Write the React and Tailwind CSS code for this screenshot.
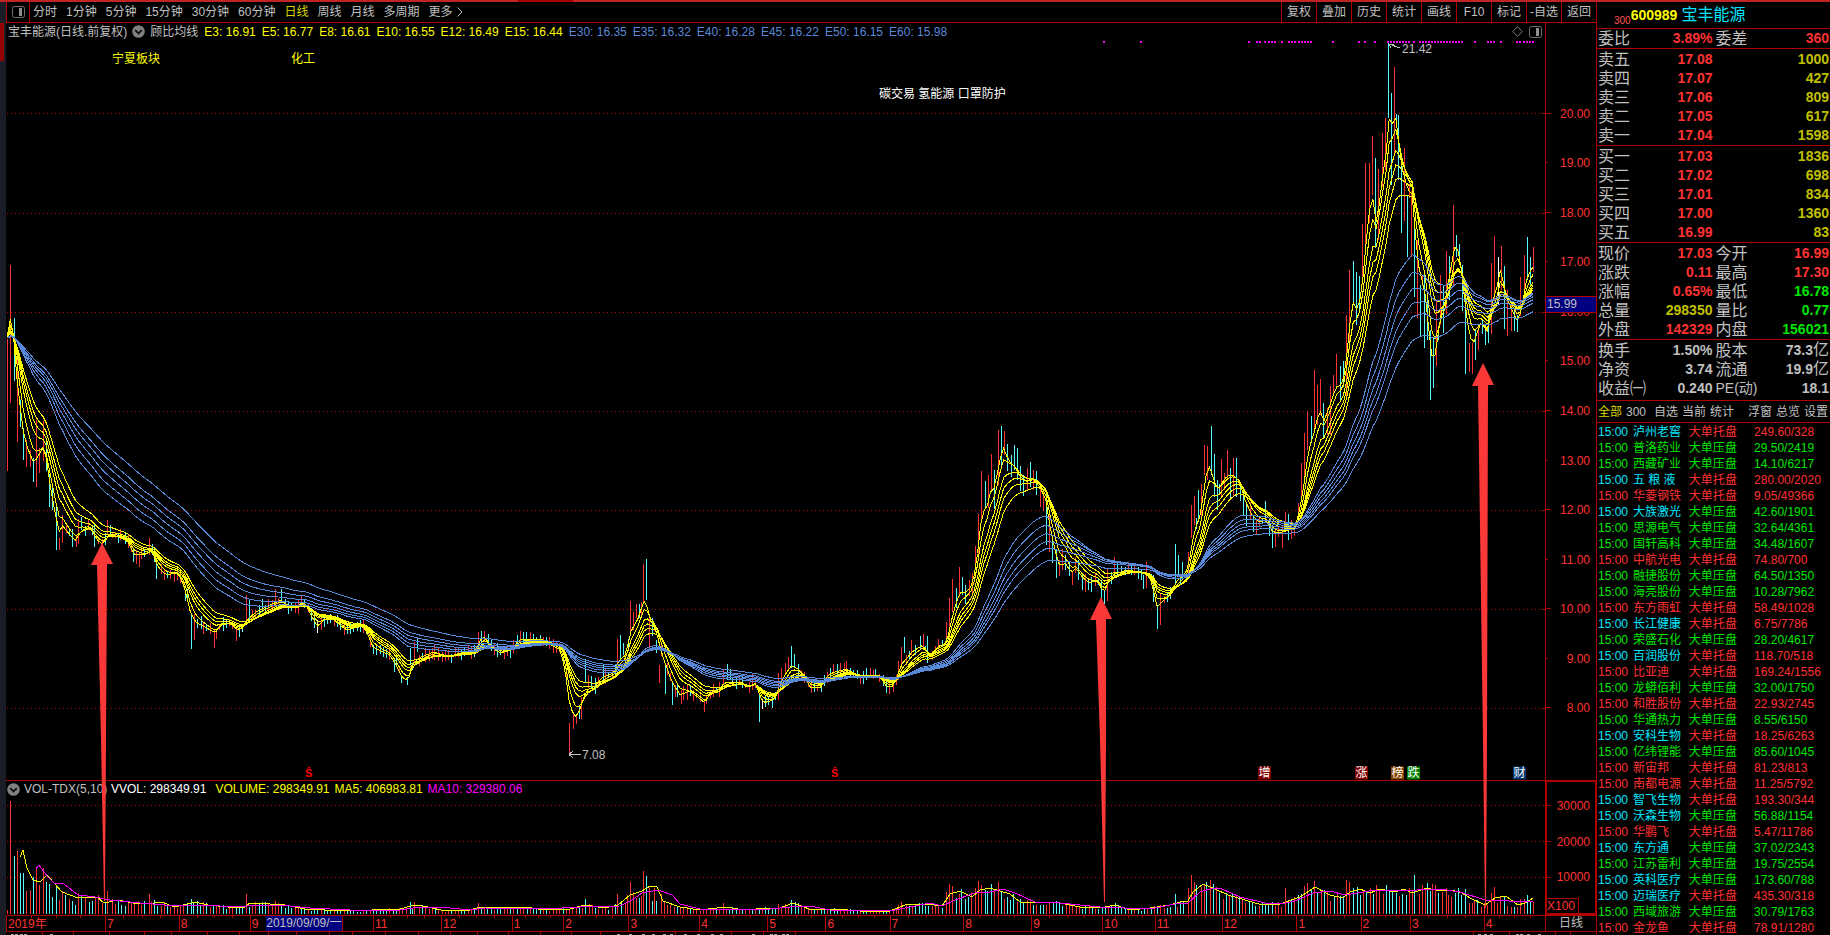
import React from 'react';

const RED = '#ff3232';
const CYAN = '#54fcfc';

const FAST = [
  [7,338],[10,318],[14,338],[17,380],[23,430],[28,450],[34,463],[43,448],[47,460],[50,485],[56,517],[59,532],[62,525],[75,541],[81,531],[90,527],[98,541],[103,544],[109,535],[120,537],[128,542],[134,554],[145,555],[152,550],[158,567],[166,575],[177,573],[182,580],[186,593],[191,615],[197,623],[207,628],[215,633],[222,623],[230,623],[237,630],[243,628],[247,620],[256,612],[268,606],[281,600],[289,607],[297,607],[303,601],[307,607],[312,617],[318,627],[323,620],[333,619],[346,630],[362,626],[366,630],[373,647],[383,652],[390,655],[396,665],[402,677],[408,681],[413,663],[421,657],[434,652],[450,657],[459,653],[475,652],[480,640],[485,637],[492,648],[501,653],[511,650],[519,640],[528,639],[543,640],[555,647],[561,650],[566,677],[570,707],[575,717],[579,712],[584,697],[587,690],[594,687],[603,677],[614,673],[619,660],[626,655],[630,633],[639,617],[643,602],[646,600],[649,617],[656,630],[660,647],[665,663],[672,682],[680,695],[690,691],[698,697],[705,703],[710,693],[719,690],[724,683],[731,682],[742,682],[747,688],[756,683],[759,693],[763,703],[774,700],[779,687],[785,675],[791,666],[797,668],[805,677],[810,688],[821,687],[828,675],[835,672],[847,669],[858,677],[874,675],[881,678],[887,687],[892,687],[897,678],[901,665],[912,652],[923,645],[930,657],[937,647],[947,643],[949,630],[955,607],[960,592],[966,593],[972,585],[976,567],[979,540],[982,513],[987,507],[991,490],[995,488],[999,462],[1004,447],[1008,460],[1015,467],[1021,478],[1028,482],[1033,479],[1040,487],[1046,500],[1050,527],[1055,550],[1060,567],[1065,562],[1071,573],[1076,568],[1083,578],[1090,583],[1097,580],[1104,593],[1108,582],[1114,574],[1128,570],[1143,573],[1150,577],[1154,593],[1157,607],[1164,600],[1170,595],[1176,582],[1186,573],[1190,557],[1195,527],[1199,522],[1204,490],[1207,470],[1210,467],[1214,480],[1218,491],[1222,483],[1228,475],[1234,475],[1240,483],[1245,500],[1252,515],[1259,522],[1267,520],[1271,530],[1276,533],[1283,532],[1295,528],[1298,517],[1302,497],[1305,477],[1309,447],[1313,437],[1317,420],[1320,409],[1323,423],[1329,408],[1336,387],[1342,385],[1346,367],[1348,337],[1353,302],[1357,310],[1361,297],[1365,257],[1368,220],[1372,193],[1376,223],[1379,207],[1383,173],[1387,147],[1389,118],[1391,130],[1395,112],[1398,137],[1403,173],[1408,190],[1412,193],[1415,230],[1418,263],[1425,293],[1430,340],[1433,367],[1437,343],[1441,313],[1445,303],[1450,273],[1455,245],[1458,250],[1462,273],[1465,303],[1469,333],[1473,345],[1477,333],[1481,323],[1488,332],[1492,303],[1497,287],[1501,267],[1505,293],[1512,310],[1518,322],[1522,307],[1527,277],[1533,267],
];

const BARS = `7,339,471,r 10,265,403,r 14,318,381,c 17,360,442,r 20,400,427,c 23,428,460,c 26,440,467,r 30,450,467,r 33,458,482,c 36,420,487,r 39,448,473,r 43,421,461,r 46,441,471,c 49,474,507,c 52,488,510,c 56,507,550,c 59,538,550,r 62,515,543,r 72,529,547,c 78,519,544,r 81,517,530,c 88,520,530,r 94,525,547,c 107,520,535,r 110,525,535,c 120,529,540,r 133,548,562,c 136,550,564,r 139,552,567,r 149,538,555,r 152,544,555,c 156,560,579,c 185,590,601,c 191,614,649,c 194,614,640,r 201,616,629,c 214,630,648,r 236,628,641,r 246,595,620,r 249,600,620,c 262,599,612,c 275,589,607,r 281,589,603,c 301,595,606,r 317,620,633,w 394,658,672,c 401,675,683,c 407,677,685,c 410,648,665,c 414,642,662,r 417,638,652,c 434,645,660,r 478,632,648,r 481,631,645,c 488,634,648,c 520,631,645,r 523,632,645,c 526,632,645,c 569,723,753,r 573,712,729,r 576,714,724,r 581,697,719,r 585,659,682,c 588,675,688,r 591,676,688,c 603,665,680,c 617,639,665,r 620,635,660,c 623,643,655,c 630,601,633,r 633,612,630,r 636,604,618,r 639,604,618,c 643,564,602,r 646,559,600,c 649,615,647,r 652,618,636,c 656,640,653,c 659,665,683,r 665,663,694,c 672,682,705,c 675,685,697,r 681,690,704,r 704,700,712,r 723,669,685,r 727,664,680,c 730,669,680,c 752,674,690,r 759,693,722,c 762,699,709,w 778,673,700,r 781,668,685,r 785,663,675,r 788,657,670,r 791,646,668,c 794,654,668,c 833,664,675,r 846,661,675,r 875,669,677,c 898,661,680,r 901,647,668,r 904,637,653,c 911,640,655,r 920,636,650,c 923,634,648,r 927,636,663,c 946,622,643,r 949,598,648,r 952,579,612,r 956,588,608,c 959,567,597,r 962,577,595,c 965,585,604,c 969,580,596,r 972,573,595,r 975,546,570,r 978,514,560,r 981,471,522,r 985,481,508,c 988,475,508,r 991,454,490,r 994,470,509,c 998,430,485,r 1001,426,465,c 1004,431,455,r 1007,444,471,c 1011,455,477,c 1014,445,470,c 1017,448,480,c 1020,466,491,c 1023,475,496,c 1027,468,490,r 1030,462,487,c 1033,470,490,r 1036,471,495,c 1040,485,507,r 1043,489,511,r 1046,495,545,c 1049,510,552,r 1052,540,563,c 1056,550,578,c 1059,560,576,r 1062,549,570,r 1065,555,570,c 1069,562,576,c 1072,572,585,r 1075,557,573,r 1078,560,580,c 1082,575,590,c 1085,574,592,r 1088,578,590,c 1091,577,592,c 1101,580,600,c 1104,590,604,c 1107,568,601,r 1114,557,575,r 1117,562,576,c 1143,575,589,c 1146,562,588,r 1153,575,602,c 1157,605,629,c 1160,593,625,r 1175,544,583,c 1178,555,575,c 1182,562,578,c 1188,552,575,r 1191,505,538,r 1194,496,525,r 1198,490,520,c 1201,484,520,r 1204,445,475,r 1207,446,480,r 1211,426,475,c 1214,454,497,c 1217,480,510,c 1221,459,497,r 1224,473,490,r 1227,450,478,r 1230,468,499,c 1233,458,497,r 1236,458,497,c 1240,483,501,c 1243,490,516,c 1246,505,526,c 1250,502,520,r 1253,517,532,c 1256,520,534,r 1265,501,523,c 1269,520,536,c 1272,525,548,c 1275,530,547,r 1282,525,548,r 1285,512,532,r 1288,514,540,c 1291,520,539,r 1298,503,523,r 1301,463,502,r 1304,433,480,r 1307,411,450,r 1311,416,443,c 1314,370,432,r 1317,385,425,r 1320,379,415,r 1323,403,437,c 1327,408,435,r 1330,386,435,r 1333,375,393,r 1336,354,385,r 1340,366,400,c 1343,361,387,c 1346,315,400,r 1349,270,350,r 1353,261,305,c 1356,272,325,c 1359,276,310,c 1362,224,285,r 1365,163,255,r 1369,163,223,r 1372,136,195,r 1375,158,248,c 1378,169,240,r 1382,133,187,r 1385,118,170,r 1388,42,118,c 1391,93,185,c 1394,67,155,r 1398,115,180,c 1401,155,233,c 1404,148,221,r 1407,195,257,c 1411,191,257,r 1414,219,297,c 1417,240,318,r 1420,285,336,c 1424,270,348,c 1427,300,340,c 1430,330,400,c 1433,338,388,c 1436,300,366,r 1440,275,325,r 1443,285,333,c 1446,251,314,r 1449,256,300,c 1453,205,287,r 1456,235,257,c 1459,244,265,c 1462,265,311,c 1465,298,374,c 1469,343,372,r 1472,343,374,r 1475,329,360,c 1478,325,350,r 1482,320,334,c 1485,325,345,c 1488,315,343,c 1491,263,334,r 1494,236,300,r 1498,257,305,w 1501,246,290,r 1504,266,329,c 1507,290,336,r 1511,305,331,r 1514,310,331,c 1517,315,332,c 1520,277,316,r 1524,255,293,r 1527,237,280,c 1530,257,285,c 1533,247,272,r`
  .split(' ')
  .map((s) => {
    const [x, top, bottom, kind] = s.split(',');
    return { x: +x, top: +top, bottom: +bottom, color: kind === 'r' ? RED : kind === 'c' ? CYAN : '#ffffff' };
  });

const VOL_BARS = `7,910,r 10,801,r 14,856,c 17,851,r 20,873,c 23,873,c 26,891,r 30,890,r 33,877,c 36,868,r 39,885,r 43,868,r 46,882,c 49,884,c 52,897,c 56,887,c 59,900,r 62,891,r 65,895,c 69,899,r 72,901,c 75,905,c 78,893,r 81,896,c 85,897,r 107,891,r 149,894,r 191,899,c 246,894,r 275,901,r 410,902,c 414,902,r 478,903,r 585,899,c 617,894,r 627,895,r 630,882,r 633,892,r 636,898,r 639,898,c 643,871,r 646,876,c 649,888,r 652,901,c 656,901,c 723,903,r 778,904,r 791,900,c 898,905,r 901,902,r 946,892,r 949,884,r 952,886,r 956,898,c 959,894,r 965,899,c 975,888,r 978,881,r 981,885,r 985,890,c 998,882,r 1001,892,c 1175,894,c 1188,888,r 1191,875,r 1194,882,r 1201,887,r 1204,884,r 1285,888,r 1304,886,r 1307,883,r 1314,881,r 1346,880,r 1349,882,r 1353,888,c 1414,875,c 1427,883,c 1430,891,c 1446,888,r 1465,889,c 1469,903,r 1472,903,r 1491,893,r 1494,887,r 1504,897,c 1507,906,r 1511,907,r 1514,907,c 1520,899,r 1524,899,r 1527,895,c 1530,902,c 1533,902,r`
  .split(' ')
  .map((s) => {
    const [x, top, kind] = s.split(',');
    return { x: +x, top: +top, color: kind === 'r' ? RED : CYAN };
  });

const MA5 = [[20,857],[23,850],[27,868],[33,880],[40,882],[47,875],[54,883],[62,892],[78,898],[97,897],[104,903],[118,900],[133,903],[147,904],[161,902],[175,907],[195,902],[208,905],[228,907],[243,908],[250,903],[270,904],[285,905],[305,909],[345,911],[400,909],[415,905],[428,907],[445,911],[470,910],[480,907],[500,908],[525,907],[545,910],[570,909],[585,905],[605,908],[618,905],[630,895],[642,891],[650,886],[657,887],[663,901],[680,907],[700,910],[725,907],[745,910],[768,908],[780,908],[793,903],[812,910],[835,909],[860,911],[890,911],[905,905],[925,904],[942,906],[950,894],[960,891],[972,897],[980,890],[990,888],[1000,891],[1010,894],[1020,902],[1060,903],[1080,907],[1100,908],[1115,905],[1130,910],[1150,908],[1170,905],[1180,902],[1188,901],[1193,892],[1203,884],[1215,889],[1228,895],[1245,900],[1262,905],[1280,904],[1300,897],[1315,887],[1330,895],[1343,898],[1350,892],[1360,889],[1370,893],[1380,889],[1395,892],[1404,889],[1412,893],[1427,888],[1440,891],[1452,890],[1462,893],[1470,898],[1485,905],[1495,898],[1506,896],[1518,905],[1525,903],[1533,898]];
const MA10 = [[36,869],[39,865],[47,876],[54,883],[64,884],[78,895],[95,897],[110,900],[140,903],[165,905],[200,905],[240,907],[255,905],[280,905],[310,908],[350,910],[400,910],[420,907],[440,907],[470,910],[485,908],[545,909],[580,907],[620,906],[632,900],[642,893],[658,890],[672,895],[680,904],[700,909],[770,909],[800,906],[815,907],[830,910],[890,911],[930,903],[942,906],[955,900],[975,893],[990,892],[1003,889],[1015,893],[1035,902],[1060,903],[1100,907],[1150,909],[1175,904],[1188,903],[1200,892],[1213,888],[1222,889],[1240,897],[1265,903],[1280,904],[1295,901],[1313,893],[1330,891],[1345,895],[1375,890],[1395,891],[1440,889],[1460,892],[1485,900],[1533,902]];

const DAYS = 467;
const dayX = (i) => 7 + (i * 1526) / DAYS;
const noise = (n) => {
  const v = Math.sin(n * 12.9898) * 43758.5453;
  return v - Math.floor(v);
};
function sample(points, x) {
  if (x <= points[0][0]) return points[0][1];
  for (let i = 1; i < points.length; i++) {
    if (x <= points[i][0]) {
      const [x0, y0] = points[i - 1];
      const [x1, y1] = points[i];
      return y0 + ((y1 - y0) * (x - x0)) / (x1 - x0);
    }
  }
  return points[points.length - 1][1];
}

const fastLine = Array.from({ length: DAYS + 1 }, (_, i) => sample(FAST, dayX(i)));
const closes = fastLine.map((y, i) => (i ? 2 * y - fastLine[i - 1] : y));
function emaPath(period) {
  const k = 2 / (period + 1);
  let v = closes[0];
  return closes
    .map((c, i) => {
      v += k * (c - v);
      return `${i ? 'L' : 'M'}${dayX(i).toFixed(1)} ${v.toFixed(1)}`;
    })
    .join('');
}
const linePath = (points) => points.map(([x, y], i) => `${i ? 'L' : 'M'}${x} ${y}`).join('');

const fillerBars = fastLine
  .map((y, i) => ({
    x: Math.round(dayX(i)),
    top: Math.round(y - 2 - noise(i) * 6),
    bottom: Math.round(y + 2 + noise(i + 500) * 6),
    color: noise(i + 900) > 0.5 ? RED : CYAN,
  }))
  .filter((b) => !BARS.some((k) => Math.abs(k.x - b.x) < 2));
const candles = [...fillerBars, ...BARS];

const fillerVolume = fastLine
  .map((_, i) => {
    const x = Math.round(dayX(i));
    const h = (914 - sample(MA5, x)) * (0.65 + noise(i + 77) * 0.6);
    return { x, top: Math.round(914 - h), color: noise(i + 900) > 0.5 ? RED : CYAN };
  })
  .filter((b) => !VOL_BARS.some((k) => Math.abs(k.x - b.x) < 2));
const volumes = [...fillerVolume, ...VOL_BARS];

const SIGNALS = [
  1103, 1140, 1248, 1256, 1259, 1264, 1268, 1271, 1274, 1281, 1288, 1291, 1294, 1298, 1301, 1304, 1307, 1310, 1332, 1358, 1364, 1374,
  1387, 1390, 1393, 1396, 1399, 1402, 1405, 1408, 1413, 1419, 1422, 1425, 1428, 1431, 1434, 1437, 1440, 1443, 1446, 1449, 1452, 1455, 1458, 1461,
  1474, 1487, 1490, 1493, 1500, 1516, 1519, 1523, 1526, 1529, 1532,
];

const PERIODS = ['分时', '1分钟', '5分钟', '15分钟', '30分钟', '60分钟', '日线', '周线', '月线', '多周期'];
const TOOLS = ['复权', '叠加', '历史', '统计', '画线', 'F10', '标记', '-自选', '返回'];
const EMAS = [
  ['E3', '16.91'], ['E5', '16.77'], ['E8', '16.61'], ['E10', '16.55'], ['E12', '16.49'], ['E15', '16.44'],
  ['E30', '16.35'], ['E35', '16.32'], ['E40', '16.28'], ['E45', '16.22'], ['E50', '16.15'], ['E60', '15.98'],
];

const MONTHS = [
  ['2019年', 100], ['7', 74], ['8', 71], ['9', 15], ['2019/09/09/一', 78], ['', 30], ['11', 68], ['12', 71], ['1', 51], ['2', 65],
  ['3', 71], ['4', 68], ['5', 58], ['6', 64], ['7', 74], ['8', 68], ['9', 71], ['10', 52], ['11', 67], ['12', 75], ['1', 64], ['2', 49], ['3', 74], ['4', 61],
];

const R = 'text-[#ff3232]';
const G = 'text-[#00e600]';
const Y = 'text-[#c0c000]';
const W = 'text-[#c0c0c0]';
const C = 'text-[#00e6ff]';

const SECTIONS = [
  [['委比', '3.89%', R, '委差', '360', R]],
  [
    ['卖五', '17.08', R, '', '1000', Y],
    ['卖四', '17.07', R, '', '427', Y],
    ['卖三', '17.06', R, '', '809', Y],
    ['卖二', '17.05', R, '', '617', Y],
    ['卖一', '17.04', R, '', '1598', Y],
  ],
  [
    ['买一', '17.03', R, '', '1836', Y],
    ['买二', '17.02', R, '', '698', Y],
    ['买三', '17.01', R, '', '834', Y],
    ['买四', '17.00', R, '', '1360', Y],
    ['买五', '16.99', R, '', '83', Y],
  ],
  [
    ['现价', '17.03', R, '今开', '16.99', R],
    ['涨跌', '0.11', R, '最高', '17.30', R],
    ['涨幅', '0.65%', R, '最低', '16.78', G],
    ['总量', '298350', Y, '量比', '0.77', G],
    ['外盘', '142329', R, '内盘', '156021', G],
  ],
  [
    ['换手', '1.50%', W, '股本', '73.3亿', W],
    ['净资', '3.74', W, '流通', '19.9亿', W],
    ['收益㈠', '0.240', W, 'PE(动)', '18.1', W],
  ],
];

const SECTION_PADDING = ['', 'pt-px', 'pt-px', 'pt-px', 'pt-px pb-[2px]'];

const FEED = [
  ['泸州老窖', C, '托', '249.60/328'], ['普洛药业', G, '压', '29.50/2419'], ['西藏矿业', G, '压', '14.10/6217'],
  ['五 粮 液', C, '托', '280.00/2020'], ['华菱钢铁', R, '托', '9.05/49366'], ['大族激光', C, '压', '42.60/1901'],
  ['思源电气', G, '压', '32.64/4361'], ['国轩高科', G, '压', '34.48/1607'], ['中航光电', R, '托', '74.80/700'],
  ['融捷股份', G, '压', '64.50/1350'], ['海亮股份', G, '压', '10.28/7962'], ['东方雨虹', R, '托', '58.49/1028'],
  ['长江健康', C, '托', '6.75/7786'], ['荣盛石化', G, '压', '28.20/4617'], ['百润股份', C, '托', '118.70/518'],
  ['比亚迪', R, '托', '169.24/1556'], ['龙蟒佰利', G, '压', '32.00/1750'], ['和胜股份', R, '托', '22.93/2745'],
  ['华通热力', G, '压', '8.55/6150'], ['安科生物', C, '托', '18.25/6263'], ['亿纬锂能', G, '压', '85.60/1045'],
  ['新宙邦', R, '托', '81.23/813'], ['南都电源', R, '托', '11.25/5792'], ['智飞生物', C, '托', '193.30/344'],
  ['沃森生物', C, '压', '56.88/1154'], ['华鹏飞', R, '托', '5.47/11786'], ['东方通', C, '压', '37.02/2343'],
  ['江苏雷利', G, '压', '19.75/2554'], ['英科医疗', C, '压', '173.60/788'], ['迈瑞医疗', C, '托', '435.30/318'],
  ['西域旅游', G, '压', '30.79/1763'], ['金龙鱼', R, '托', '78.91/1280'],
];

function PanelIcon() {
  return (
    <svg viewBox="0 0 13 12" className="h-3 w-[13px] shrink-0" aria-hidden="true">
      <rect x="0.5" y="0.5" width="12" height="11" rx="2" fill="none" stroke="#707070" />
      <rect x="7" y="2" width="3" height="8" fill="#909090" />
    </svg>
  );
}

function ChevronBadge() {
  return (
    <svg viewBox="0 0 13 13" className="size-[13px] shrink-0" aria-hidden="true">
      <circle cx="6.5" cy="6.5" r="6.3" fill="#808080" />
      <path d="M3.2 5.2 6.5 8.4 9.8 5.2" fill="none" stroke="#101010" strokeWidth="1.8" />
    </svg>
  );
}

function Pin({ x, y, className, children }) {
  return (
    <span
      className={`absolute -translate-y-1/2 whitespace-nowrap ${className}`}
      style={{ left: `${((x - 6) / 1539) * 100}%`, top: `${((y - 40) / 740) * 100}%` }}
    >
      {children}
    </span>
  );
}

function Toolbar() {
  return (
    <nav className="flex h-[21px] shrink-0 border-b border-l border-[#b00000]">
      <button aria-label="侧栏" className="flex w-[23px] items-center justify-center border-r border-[#b00000]">
        <PanelIcon />
      </button>
      <div className="flex flex-1 items-center gap-[9px] pl-[3px]">
        {PERIODS.map((p) => (
          <button key={p} className={p === '日线' ? 'text-[#d8d800]' : ''}>{p}</button>
        ))}
        <button className="flex items-center gap-1">
          更多
          <svg viewBox="0 0 6 10" className="h-[10px] w-[6px]" aria-hidden="true">
            <path d="M0.5 0.5 5 5 0.5 9.5" fill="none" stroke="#c0c0c0" />
          </svg>
        </button>
      </div>
      {TOOLS.map((t) => (
        <button key={t} className="w-[35px] border-l border-[#b00000] text-center whitespace-nowrap">{t}</button>
      ))}
    </nav>
  );
}

function PriceChart() {
  return (
    <div className="flex min-h-0 min-w-0 flex-1 flex-col">
      <div className="flex h-[17px] shrink-0 items-center gap-[6px] pr-[3px] pl-[2px] whitespace-nowrap">
        <div className="flex items-center gap-[5px]">
          <span>宝丰能源(日线.前复权)</span>
          <ChevronBadge />
          <span>顾比均线</span>
        </div>
        {EMAS.map(([name, value], i) => (
          <span key={name} className={i < 6 ? 'text-[#ffff00]' : 'text-[#5888d8]'}>{name}: {value}</span>
        ))}
        <svg viewBox="0 0 11 11" className="ml-auto size-[11px] shrink-0" aria-hidden="true">
          <path d="M5.5 0.7 10.3 5.5 5.5 10.3 0.7 5.5Z" fill="none" stroke="#808080" />
        </svg>
        <PanelIcon />
      </div>
      <div className="relative min-h-0 flex-1">
        <svg viewBox="6 40 1539 740" preserveAspectRatio="none" shapeRendering="crispEdges" className="absolute inset-0 size-full" role="img" aria-label="日线K线图">
          {[113, 213, 312, 411, 510, 609, 708].map((y) => (
            <g key={y} stroke="#b80000">
              <line x1="7" x2="1540" y1={y + 0.5} y2={y + 0.5} strokeDasharray="1 3" />
              <line x1="1542" x2="1545" y1={y + 0.5} y2={y + 0.5} />
            </g>
          ))}
          {candles.map((b, i) => (
            <rect key={i} x={b.x} y={b.top} width="1" height={b.bottom - b.top} fill={b.color} />
          ))}
          {[3, 5, 8, 10, 12, 15].map((p) => (
            <path key={p} d={emaPath(p)} fill="none" stroke="#ffff00" />
          ))}
          {[30, 35, 40, 45, 50, 60].map((p) => (
            <path key={p} d={emaPath(p)} fill="none" stroke="#5888d8" />
          ))}
          {SIGNALS.map((x) => (
            <rect key={x} x={x} y="41" width="2" height="2" fill="#ff00ff" />
          ))}
          <path d="M1389 44 1400 48M1389 44 1394 44M1389 44 1391 48" fill="none" stroke="#c0c0c0" />
          <path d="M569 754.5H581M569 754.5 573 751M569 754.5 573 758" fill="none" stroke="#c0c0c0" />
        </svg>
        <Pin x={1402} y={49} className="text-[#c0c0c0]">21.42</Pin>
        <Pin x={582} y={755} className="text-[#c0c0c0]">7.08</Pin>
        <Pin x={112} y={59} className="text-[#ffff00]">宁夏板块</Pin>
        <Pin x={291} y={59} className="text-[#ffff00]">化工</Pin>
        <Pin x={879} y={94} className="text-white">碳交易 氢能源 口罩防护</Pin>
        <Pin x={305} y={773} className="text-[11px] font-bold text-[#ff0000]">Ŝ</Pin>
        <Pin x={831} y={773} className="text-[11px] font-bold text-[#ff0000]">Ŝ</Pin>
        <Pin x={1258} y={773} className="size-[13px] bg-[#800000] text-center leading-[13px] text-white">增</Pin>
        <Pin x={1355} y={773} className="size-[13px] bg-[#800000] text-center leading-[13px] text-white">涨</Pin>
        <Pin x={1391} y={773} className="size-[13px] bg-[#884400] text-center leading-[13px] text-white">榜</Pin>
        <Pin x={1407} y={773} className="size-[13px] bg-[#008000] text-center leading-[13px] text-white">跌</Pin>
        <Pin x={1513} y={773} className="size-[13px] bg-[#003870] text-center leading-[13px] text-white">财</Pin>
      </div>
    </div>
  );
}

function PriceAxis() {
  return (
    <div className="relative flex w-[51px] shrink-0 flex-col border-l border-[#b00000] text-[#ff3232]">
      <div className="flex-[131_1_0%]" />
      {[20, 19, 18, 17, 16, 15, 14, 13, 12, 11, 10, 9, 8].map((p) => (
        <div key={p} className="flex min-h-0 flex-[99_1_0%] items-center justify-between pr-[6px]">
          <span className={p % 2 ? 'h-px w-[2px] bg-[#b00000]' : 'h-px w-[5px] bg-[#b00000]'} />
          <span className="pt-px">{p}.00</span>
        </div>
      ))}
      <div className="flex-[95_1_0%]" />
      <div className="absolute top-[36%] right-0 left-0 h-[17px] border-y border-[#b00000] bg-[#000080] pl-px leading-[15px] text-[#c0c0c0]">15.99</div>
    </div>
  );
}

function VolumeChart() {
  return (
    <div className="flex min-w-0 flex-1 flex-col border-t border-[#b00000]">
      <div className="flex h-4 shrink-0 items-center gap-[5px] pl-px whitespace-nowrap">
        <ChevronBadge />
        <span className="-ml-px w-[82px]">VOL-TDX(5,10)</span>
        <span className="mr-1 text-white">VVOL: 298349.91</span>
        <span className="text-[#ffff00]">VOLUME: 298349.91</span>
        <span className="text-[#ffff00]">MA5: 406983.81</span>
        <span className="text-[#ff00ff]">MA10: 329380.06</span>
      </div>
      <div className="relative min-h-0 flex-1">
        <svg viewBox="6 797 1539 118" preserveAspectRatio="none" shapeRendering="crispEdges" className="absolute inset-0 size-full" role="img" aria-label="成交量">
          {[805.5, 841.5, 877.5].map((y) => (
            <line key={y} x1="7" x2="1544" y1={y} y2={y} stroke="#b80000" strokeDasharray="1 3" />
          ))}
          {volumes.map((b, i) => (
            <rect key={i} x={b.x} y={b.top} width="1" height={Math.max(1, 914 - b.top)} fill={b.color} />
          ))}
          <path d={linePath(MA5)} fill="none" stroke="#ffff00" />
          <path d={linePath(MA10)} fill="none" stroke="#ff00ff" />
        </svg>
      </div>
    </div>
  );
}

function VolumeAxis() {
  return (
    <div className="flex w-[51px] shrink-0 flex-col border-2 border-r border-[#b00000] text-[#ff3232]">
      <div className="flex-[6_1_0%]" />
      {['30000', '20000', '10000'].map((v) => (
        <div key={v} className="flex min-h-0 flex-[36_1_0%] items-center justify-between pr-[5px]">
          <span className="h-px w-1 bg-[#b00000]" />
          <span>{v}</span>
        </div>
      ))}
      <div className="flex flex-[18_1_0%] items-end">
        <span className="h-[15px] border-t border-r border-[#b00000] pr-[3px] leading-[15px]">X100</span>
      </div>
    </div>
  );
}

function TimeAxis() {
  return (
    <div className="flex h-4 shrink-0 border-t border-[#b00000]">
      <div className="flex min-w-0 flex-1">
        {MONTHS.map(([label, days], i) => (
          <div
            key={i}
            className={
              label.includes('/')
                ? 'min-w-0 basis-0 overflow-hidden bg-[#000080] leading-[15px] whitespace-nowrap text-[#c0c0c0]'
                : 'relative min-w-0 basis-0 border-l border-[#b00000] pl-px leading-[16px] whitespace-nowrap text-[#ff3232]'
            }
            style={{ flexGrow: days }}
          >
            {days > 45 && !label.includes('/') && (
              <div className="absolute top-0 right-0 left-0 flex h-[2px] justify-evenly">
                <i className="w-px bg-[#b00000]" />
                <i className="w-px bg-[#b00000]" />
                <i className="w-px bg-[#b00000]" />
              </div>
            )}
            {label}
          </div>
        ))}
      </div>
      <div className="w-[51px] border-l border-[#b00000] text-center leading-[15px]">日线</div>
    </div>
  );
}

function Arrows() {
  return (
    <svg viewBox="6 23 1590 908" preserveAspectRatio="none" className="pointer-events-none absolute inset-0 size-full" aria-hidden="true">
      <g fill="#fb3838">
        <path d="M102 543 113 564H107L106 740 105 901H104L101 740 97 565H91Z" />
        <path d="M1101 597 1112 619H1106L1106 740 1105 902H1104L1100 740 1096 620H1090Z" />
        <path d="M1483 363 1494 385H1488L1487 740 1486 908H1485L1483 740 1478 386H1472Z" />
      </g>
    </svg>
  );
}

function FooterStrip() {
  return (
    <div className="h-1 shrink-0 border-t border-[#b00000]">
      <svg viewBox="6 932 1590 3" preserveAspectRatio="none" shapeRendering="crispEdges" className="block h-[3px] w-full" aria-hidden="true">
        {[42, 73, 109, 144, 171, 207, 239, 268, 296, 329, 352, 385, 418, 450, 477, 508, 540, 571, 600, 675, 731, 763, 795, 1473, 1509, 1555, 1570].map((x) => (
          <rect key={x} x={x} y="932" width="1" height="3" fill="#b00000" />
        ))}
        {[11, 15, 20, 24, 50, 617, 629, 642, 652, 663, 670, 684, 697, 711, 720, 752, 770, 774, 782, 786, 1478, 1484, 1490, 1516, 1520, 1527, 1538].map((x) => (
          <rect key={x} x={x} y="934" width="3" height="1" fill="#a0a0a0" />
        ))}
      </svg>
    </div>
  );
}

function QuotePanel() {
  return (
    <aside className="flex w-[234px] shrink-0 flex-col overflow-hidden border-l border-[#b00000]">
      <header className="flex h-[26px] shrink-0 items-center pl-[17px]">
        <span className="self-end text-[10px] leading-[14px] text-[#ff5050]">300</span>
        <h1 className="flex items-center">
          <span className="text-[14px] font-bold text-[#ffff00]">600989</span>
          <span className="ml-1 text-[16px] text-[#00e6ff]">宝丰能源</span>
        </h1>
      </header>
      {SECTIONS.map((rows, s) => (
        <div key={s} className={`shrink-0 border-t border-[#b00000] ${SECTION_PADDING[s]}`}>
          <table className="w-full table-fixed border-separate border-spacing-0">
            <colgroup>
              <col className="w-[20%]" />
              <col className="w-[30%]" />
              <col className="w-[20%]" />
              <col className="w-[30%]" />
            </colgroup>
            <tbody>
              {rows.map(([label, value, color, label2, value2, color2]) => (
                <tr key={label} className="h-[19px] text-[14px] leading-[19px] whitespace-nowrap">
                  <th scope="row" className="p-0 pl-px text-left text-[16px] font-normal">{label}</th>
                  <td className={`p-0 pr-px text-right font-bold ${color}`}>{value}</td>
                  <td className={label2.startsWith('PE') ? 'p-0 pl-[2px] text-[14px]' : 'p-0 pl-[2px] text-[16px]'}>{label2}</td>
                  <td className={`p-0 pr-px text-right font-bold ${color2}`}>
                    {value2.replace('亿', '')}
                    {value2.endsWith('亿') && <span className="text-[16px] leading-none font-normal">亿</span>}
                  </td>
                </tr>
              ))}
            </tbody>
          </table>
        </div>
      ))}
      <div className="flex h-[23px] shrink-0 items-center justify-between border-y border-[#b00000] pr-[2px] pl-px">
        <div className="flex gap-1">
          <button className="text-[#d8d800]">全部</button>
          <button className="mr-1">300</button>
          <button>自选</button>
          <button>当前</button>
          <button>统计</button>
        </div>
        <div className="flex gap-1">
          <button>浮窗</button>
          <button>总览</button>
          <button>设置</button>
        </div>
      </div>
      <div className="min-h-0 flex-1 overflow-hidden pt-px">
        <table className="w-full table-fixed border-separate border-spacing-0">
          <colgroup>
            <col className="w-[15%]" />
            <col className="w-[24%]" />
            <col className="w-[28%]" />
            <col className="w-[33%]" />
          </colgroup>
          <tbody>
            {FEED.map(([name, color, side, figures]) => {
              const sideColor = side === '托' ? R : G;
              return (
                <tr key={name} className="h-4 leading-4 whitespace-nowrap">
                  <td className={`p-0 pl-px ${color}`}>15:00</td>
                  <td className={`p-0 pl-px ${color}`}>{name}</td>
                  <td className={`p-0 pl-px ${sideColor}`}>大单{side}盘</td>
                  <td className={`p-0 pl-px ${sideColor}`}>{figures}</td>
                </tr>
              );
            })}
          </tbody>
        </table>
      </div>
    </aside>
  );
}

export default function App() {
  return (
    <div className="flex h-screen flex-col overflow-hidden bg-black font-['Liberation_Sans','Noto_Sans_CJK_SC',sans-serif] text-[12px] leading-4 text-[#c0c0c0]">
      <div className="flex h-[2px] shrink-0 bg-[#c02424]">
        <div className="ml-[28.3%] w-[3%] bg-[#a80000]" />
      </div>
      <div className="flex min-h-0 flex-1">
        <div className="w-[6px] shrink-0 bg-[#1a1d26] pt-[21px]">
          <div className="h-[38px] w-1 bg-[#980008]" />
        </div>
        <main className="flex min-w-0 flex-1 flex-col">
          <Toolbar />
          <div className="relative flex min-h-0 flex-1 flex-col">
            <section className="flex min-h-0 flex-[757_1_0%]">
              <PriceChart />
              <PriceAxis />
            </section>
            <section className="flex min-h-0 flex-[135_1_0%]">
              <VolumeChart />
              <VolumeAxis />
            </section>
            <TimeAxis />
            <Arrows />
          </div>
          <FooterStrip />
        </main>
        <QuotePanel />
      </div>
    </div>
  );
}
